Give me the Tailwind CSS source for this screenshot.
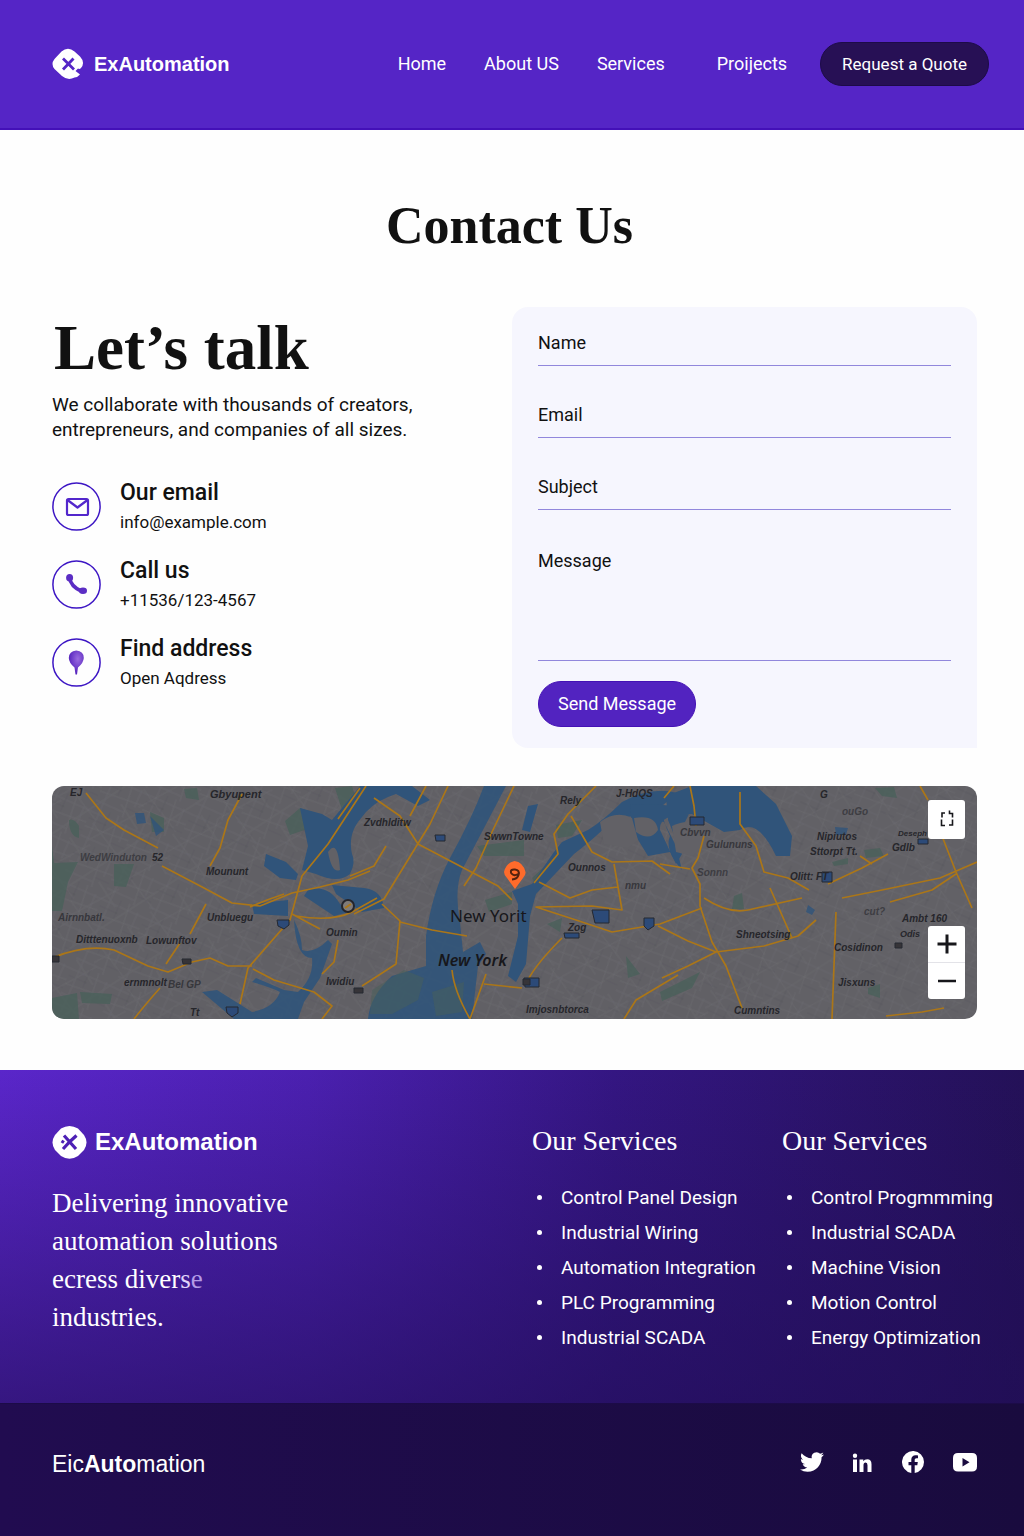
<!DOCTYPE html>
<html lang="en">
<head>
<meta charset="utf-8">
<meta name="viewport" content="width=device-width, initial-scale=1">
<title>ExAutomation – Contact Us</title>
<script src="https://cdn.jsdelivr.net/npm/@tailwindcss/browser@4"></script>
</head>
<body class="flex min-h-screen flex-col bg-[#fefefe] font-[Roboto,'Liberation_Sans',sans-serif] text-[#111]">

<header class="flex items-center justify-between border-b-2 border-[#4410b8] bg-[#5525c6] py-[42px] pr-[35px] pl-[52px] text-white">
  <a href="#" class="flex items-center gap-[10px] font-['Liberation_Sans',sans-serif] text-[20px] leading-6 font-bold">
    <svg class="size-8" viewBox="0 0 32 32" aria-hidden="true">
      <path fill="#fff" d="M9.500 3.500Q16-2 22.500 3.500L28 8.500Q33.500 14.500 29 20Q27.500 21.500 26 20.500L23.500 23L28 26.500Q26 29 22.500 29.500Q16 33 10 28L2.500 21Q-1.500 16 2.500 11Z"/>
      <path d="M11 10.500L22 21.500M21.500 10.500L11 21.500" stroke="#5525c6" stroke-width="2.800" fill="none"/>
    </svg>
    <span>ExAutomation</span>
  </a>
  <div class="flex items-center">
    <nav class="flex items-center gap-[38px] text-[18px] leading-6">
      <a href="#">Home</a>
      <a href="#">About US</a>
      <a href="#">Services</a>
      <a href="#" class="ml-[14px]">Proijects</a>
    </nav>
    <button type="button" class="ml-[33px] h-11 rounded-full border border-[#1d0b48] bg-[#271055] px-[21px] text-[17px] leading-6">Request a Quote</button>
  </div>
</header>

<main class="flex flex-col pr-[47px] pl-[52px]">
  <h1 class="mt-[68px] pr-[10px] text-center font-['Liberation_Serif',serif] text-[52px] leading-[56px] font-bold">Contact Us</h1>

  <div class="mt-[53px] grid grid-cols-[460fr_465fr]">
    <section>
      <h2 class="mt-[10px] pl-[2px] font-['Liberation_Serif',serif] text-[63px] leading-[62px] font-bold">Let’s talk</h2>
      <p class="mt-[13px] text-[19px] leading-[25px]">We collaborate with thousands of creators,<br>entrepreneurs, and companies of all sizes.</p>

      <ul class="mt-9 flex flex-col gap-5">
        <li class="flex items-start gap-[19px]">
          <svg class="mt-1 size-[49px] shrink-0" viewBox="0 0 49 49" fill="none" aria-hidden="true">
            <circle cx="24.500" cy="24.500" r="23.600" stroke="#3d16c4" stroke-width="1.500"/>
            <path d="M16.500 17H34.500Q36 17 36 18.500V31.500Q36 33 34.500 33H16.500Q15 33 15 31.500V18.500Q15 17 16.500 17ZM15.500 18L25.500 25.500L35.500 18" stroke="#5327cc" stroke-width="2.200" stroke-linejoin="round"/>
          </svg>
          <div>
            <h3 class="text-[23px] leading-[30px] font-medium">Our email</h3>
            <p class="text-[17px] leading-7">info@example.com</p>
          </div>
        </li>
        <li class="flex items-start gap-[19px]">
          <svg class="mt-1 size-[49px] shrink-0" viewBox="0 0 49 49" fill="none" aria-hidden="true">
            <circle cx="24.500" cy="24.500" r="23.600" stroke="#3d16c4" stroke-width="1.500"/>
            <path d="M17.500 17.500Q18.500 26.500 30 31.500" stroke="#5b2dc4" stroke-width="3.600" stroke-linecap="round"/>
            <ellipse cx="17.600" cy="17.800" rx="3.500" ry="3.800" fill="#5b2dc4"/>
            <ellipse cx="31" cy="30.800" rx="4" ry="3.200" fill="#5b2dc4"/>
          </svg>
          <div>
            <h3 class="text-[23px] leading-[30px] font-medium">Call us</h3>
            <p class="text-[17px] leading-7">+11536/123-4567</p>
          </div>
        </li>
        <li class="flex items-start gap-[19px]">
          <svg class="mt-1 size-[49px] shrink-0" viewBox="0 0 49 49" fill="none" aria-hidden="true">
            <defs><radialGradient id="pin" cx=".6" cy=".35" r=".6"><stop offset="0" stop-color="#9a6be0"/><stop offset="1" stop-color="#5624bd"/></radialGradient></defs>
            <circle cx="24.500" cy="24.500" r="23.600" stroke="#3d16c4" stroke-width="1.500"/>
            <path d="M24.300 12.500Q31.800 13 31.800 20Q31.500 25 26 29.500L25 36.500H23.500L22.500 29.500Q17 25 16.800 20Q17 13 24.300 12.500Z" fill="url(#pin)"/>
          </svg>
          <div>
            <h3 class="text-[23px] leading-[30px] font-medium">Find address</h3>
            <p class="text-[17px] leading-7">Open Aqdress</p>
          </div>
        </li>
      </ul>
    </section>

    <form class="flex flex-col rounded-2xl rounded-br-none bg-[#f6f6fe] px-[26px] pt-6 pb-[21px] text-[18px] leading-6">
      <div class="flex flex-col gap-[37px]">
        <div class="flex gap-3 border-b border-[#9187dc] pb-[10px]">
          <label for="name">Name</label>
          <input id="name" type="text" class="h-6 min-w-0 flex-1 bg-transparent outline-none">
        </div>
        <div class="flex gap-3 border-b border-[#9187dc] pb-[10px]">
          <label for="email">Email</label>
          <input id="email" type="email" class="h-6 min-w-0 flex-1 bg-transparent outline-none">
        </div>
        <div class="flex gap-3 border-b border-[#9187dc] pb-[10px]">
          <label for="subject">Subject</label>
          <input id="subject" type="text" class="h-6 min-w-0 flex-1 bg-transparent outline-none">
        </div>
        <div class="flex gap-3 border-b border-[#9187dc] pt-[2px] pb-2">
          <label for="message">Message</label>
          <textarea id="message" class="h-[103px] min-w-0 flex-1 resize-none bg-transparent outline-none"></textarea>
        </div>
      </div>
      <button type="submit" class="mt-5 h-[46px] self-start rounded-full border border-[#4411b5] bg-[#5223c0] px-[19px] text-white">Send Message</button>
    </form>
  </div>

  <section class="relative mt-[38px] h-[233px] overflow-hidden rounded-xl bg-[#626166]" aria-label="Map">
    <svg class="block size-full" viewBox="0 0 925 233" preserveAspectRatio="xMidYMid slice" fill="none">
      <defs>
        <pattern id="streets" width="46" height="38" patternUnits="userSpaceOnUse" patternTransform="rotate(24)">
          <path d="M0 7H46M0 23L46 19M8 0V38M27 0L31 38M0 33H30M38 5V24" stroke="#737378" stroke-width=".7" opacity=".4"/>
          <path d="M0 14H20M18 0V20M31 28H46" stroke="#4e4e53" stroke-width=".7" opacity=".4"/>
        </pattern>
        <pattern id="blocks" width="61" height="53" patternUnits="userSpaceOnUse" patternTransform="rotate(-33)">
          <path d="M0 12L61 17M0 40H61M14 0L18 53M48 0V30" stroke="#717176" stroke-width=".6" opacity=".4"/>
        </pattern>
      </defs>
      <rect width="925" height="233" fill="url(#streets)"/>
      <rect width="925" height="233" fill="url(#blocks)"/>

      <!-- parks -->
      <g fill="#48605a" opacity=".75">
        <path d="M2 77L26 76L16 96L10 125H0V60ZM62 78H82L74 101L62 100ZM17 34Q22 32 27 40L27 52Q17 50 17 34ZM132 3L145 2L147 14L134 12ZM0 212L25 207L27 233H0ZM28 206L60 208L58 218L30 217Z"/>
        <path d="M233 35L248 22L260 26L258 42L238 49ZM98 26L112 32V46H100ZM283 2L300 0L306 20L290 24Z"/>
        <path d="M425 60L472 54V70L432 70ZM433 114L460 106V118L437 126ZM504 39L530 34L520 50L506 52ZM574 170L588 188L576 192ZM480 92L508 66V76L484 100ZM495 138L510 132L508 146Z"/>
        <path d="M823 2L842 1L845 12L830 10ZM812 64L828 62L832 70L814 72ZM682 110L690 107L692 123L680 123ZM608 206L648 186L640 202L610 215ZM816 202L828 198L828 212L816 208ZM780 76L796 72V78L782 80Z"/>
      </g>
      <!-- rivers and bays -->
      <g fill="#30547a">
        <path d="M248 22L270 28L280 34L300 10L308 0H360L378 14L366 20L344 8Q325 14 314 26L306 36Q296 50 300 68Q304 76 298 88Q286 98 264 88L250 84L256 60Z"/>
        <path d="M214 68L234 76L246 88L244 94L228 92L212 80ZM200 118L236 114L236 130L202 128ZM256 104Q276 98 288 118L304 124L282 130L252 110ZM280 99L312 102Q330 104 332 122L310 126L284 108Z"/>
        <path d="M242 134Q250 150 250 164Q262 168 276 154L280 158L268 192L252 216L246 233H182L150 206L165 204L200 226Q222 222 228 206Q220 202 200 196L204 192L232 204L246 206Q262 192 260 172Q244 172 242 134Z" opacity=".9"/>
        <path d="M432 0H454Q430 46 410 84Q402 104 408 136L411 166L428 156L434 168L426 180L420 233H316Q318 210 340 190L374 180L374 150Q380 106 398 72Q420 32 432 0Z" opacity=".9"/>
        <path d="M476 20L486 18L478 46L470 44ZM460 105L480 98L502 66L510 56L536 44Q552 34 570 16Q600 0 625 7L610 20Q610 34 618 50Q612 64 630 84L624 60L612 36Q580 26 560 34Q548 48 522 68L484 108L478 130L474 178L464 196L456 190L466 150L466 118Z"/>
        <path d="M614 10L640 0H704L724 18L740 50L738 70L724 70Q706 32 688 44L672 46L640 28Q606 28 608 44L624 78L630 68L616 34ZM578 18Q612 18 640 22L618 66L596 70L580 44Z"/>
        <path d="M83 27L92 27L94 37L85 38ZM98 30L112 44L104 50ZM783 41L796 42L794 49H784ZM756 119L763 124L760 129L754 126Z" opacity=".8"/>
      </g>
      <g fill="#626166">
        <path d="M548 36Q564 24 580 32L586 54L576 62L552 58ZM582 32Q604 28 606 44Q598 56 584 46ZM276 66Q286 52 288 84Q280 88 276 66Z"/>
        <path d="M620 40Q650 26 654 60L640 70L624 66Z"/>
      </g>
      <path d="M320 204L352 184L372 192L366 214L340 228H318ZM380 206L412 196L410 226L384 230Z" fill="#48605a" opacity=".5"/>

      <!-- main roads -->
      <g stroke="#ab7618" stroke-width="1.700" stroke-linejoin="round">
        <path d="M34 7L54 32L72 44L106 62M110 80L152 102L180 117L208 120L240 107L268 101L296 94L318 85M190 8L176 34L168 62L158 80M314 0L276 58L250 90L238 134L196 182L188 218M308 2L286 33"/>
        <path d="M198 121Q214 114 232 108M240 128L268 143M244 130Q280 136 300 126L325 112M0 172Q34 158 62 164L96 180L116 186L140 176L158 172L176 180L200 180M128 157L114 178M154 118L138 148M108 202Q92 220 82 233M201 183L222 194L262 206L280 220L270 233M286 154L282 176L270 188"/>
        <path d="M322 12L348 30L366 58L446 100L460 114M374 0L358 30M396 0L378 38L332 113L302 128M330 118L348 135L344 178L310 200M348 136L380 144L415 150M334 60L322 80L298 90"/>
        <path d="M462 0L440 46L424 82L412 100M400 184Q402 205 418 233L434 188M432 198L470 202M482 97L506 68L502 48L516 28L544 0M519 30L540 66L560 76L600 75L618 88M562 78L570 124L540 120L484 121L524 134L560 146L608 138L650 122M487 96L518 112L540 104L566 101M510 152Q484 178 476 194M626 189L584 214L572 233M612 12L622 0"/>
        <path d="M638 0L642 20L644 40M652 50L646 72L640 82L648 98L648 120L660 156L674 180L690 222M688 6V38L704 60L712 86L736 92L757 104M638 83L608 78M606 140L636 155L664 166L712 160L746 150M610 192L636 180L666 165M652 112Q676 128 696 124L750 112M718 102L740 152M776 98L810 82L836 68M808 70L820 78M790 112L830 104L888 92L925 76M838 116L880 104L904 88M784 126L780 233M868 0L876 14M890 50L904 86L920 122M834 230L870 226L892 222M764 134L746 150"/>
      </g>

      <!-- route shields -->
      <g stroke="#252831" fill="#2c4a78">
        <path d="M225 134H237V139L232 143L226 140ZM174 221H186V227L180 231L175 227ZM383 49H393V55H384ZM540 124H557V137H543ZM512 147H527V152H513ZM592 132H602V140L596 144L592 140ZM472 192H487V201H473ZM638 31H652V39H638ZM866 53H876V58H866ZM770 86H780V96H770Z"/>
        <path fill="#363438" d="M0 170H7V176H0ZM130 173H139V178H131ZM843 157H850V162H843ZM302 202H311V207H302ZM471 193H478V199H471Z"/>
      </g>
      <circle cx="296" cy="120" r="6" stroke="#25252b" stroke-width="2" fill="#807b79"/>
      <path d="M293 122L299 118" stroke="#ab7618" stroke-width="2"/>

      <!-- district names -->
      <g font-family="'Liberation Sans', sans-serif" font-size="10" font-style="italic" font-weight="bold" fill="#26262b">
        <text x="18" y="10">EJ</text>
        <text x="158" y="12" font-size="11">Gbyupent</text>
        <text x="28" y="75" opacity=".6">WedWinduton</text>
        <text x="100" y="75">52</text>
        <text x="154" y="89">Moununt</text>
        <text x="6" y="135" opacity=".7">Airnnbatl.</text>
        <text x="155" y="135">Unbluegu</text>
        <text x="24" y="157">Ditttenuoxnb</text>
        <text x="94" y="158">Lowunftov</text>
        <text x="72" y="200">ernmnolt</text>
        <text x="116" y="202" opacity=".7">Bel GP</text>
        <text x="138" y="230">Tt</text>
        <text x="274" y="150">Oumin</text>
        <text x="274" y="199">Iwidiu</text>
        <text x="312" y="40">Zvdhlditw</text>
        <text x="432" y="54">SwwnTowne</text>
        <text x="508" y="18">Rely</text>
        <text x="516" y="85">Ounnos</text>
        <text x="573" y="103" opacity=".7">nmu</text>
        <text x="564" y="11">J-HdQS</text>
        <text x="516" y="145">Zog</text>
        <text x="474" y="227">Imjosnbtorca</text>
        <text x="768" y="12">G</text>
        <text x="628" y="50" opacity=".7">Cbvvn</text>
        <text x="654" y="62" opacity=".7">Gulununs</text>
        <text x="645" y="90" opacity=".6">Sonnn</text>
        <text x="765" y="54">Nipiutos</text>
        <text x="758" y="69">Sttorpt Tt.</text>
        <text x="738" y="94">OIitt: FT</text>
        <text x="846" y="50" font-size="8">Deseph</text>
        <text x="840" y="65">Gdlb</text>
        <text x="684" y="152">Shneotsing</text>
        <text x="782" y="165">Cosidinon</text>
        <text x="850" y="136">Ambt 160</text>
        <text x="848" y="151" font-size="9">Odis</text>
        <text x="786" y="200">Jisxuns</text>
        <text x="682" y="228">Cumntins</text>
        <text x="790" y="29" opacity=".6">ouGo</text>
        <text x="812" y="129" opacity=".6">cut?</text>
      </g>
      <g font-family="'Noto Sans', sans-serif" font-size="17" fill="#17171b">
        <text x="398" y="136">New Yorit</text>
        <text x="386" y="180" font-size="16" font-style="italic" font-weight="600">New York</text>
      </g>
      <path d="M462.500 75Q471 76 473.500 86Q474 89 471 92L463 103L455 92Q452 89 452 86Q454 77 462.500 75Z" fill="#ff6b2b"/>
      <path d="M459 87Q458 83 463 83.500Q468 84 466.500 89Q465.500 93 460 93.500M459 87Q462 91 466 88" stroke="#53220f" stroke-width="2"/>
    </svg>
    <button type="button" aria-label="Full screen" class="absolute top-[14px] right-3 grid h-[39px] w-[37px] place-items-center rounded-[3px] bg-white">
      <svg class="size-5" viewBox="0 0 20 20" fill="none" stroke="#17171b" stroke-width="1.600"><path d="M8 3H5V7.500M4.500 9.500V15.500H8M12.500 .5V3.500H15.500V7.500M15.500 9.500V15H12"/></svg>
    </button>
    <div class="absolute right-3 bottom-5 flex w-[37px] flex-col rounded-[3px] bg-white">
      <button type="button" aria-label="Zoom in" class="grid h-9 place-items-center">
        <svg class="size-5" viewBox="0 0 20 20" stroke="#17171b" stroke-width="3"><path d="M.5 10H19.500M10 .5V19.500"/></svg>
      </button>
      <button type="button" aria-label="Zoom out" class="grid h-[37px] place-items-center border-t border-[#e3e3e8]">
        <svg class="size-5" viewBox="0 0 20 20" stroke="#17171b" stroke-width="2.600"><path d="M1 10H19"/></svg>
      </button>
    </div>
  </section>
</main>

<footer class="mt-[51px] flex flex-1 flex-col text-white">
  <div class="grid grid-cols-[480fr_250fr_242fr] border-b border-[#1c0b48] bg-[linear-gradient(to_bottom,transparent,#200d55a0),linear-gradient(to_right,#5a26ca,#4b20b0_30%,#341682_60%,#241158)] pt-[54px] pb-12 pl-[52px]">
    <section>
      <a href="#" class="flex items-center gap-2 font-['Liberation_Sans',sans-serif] text-[24px] leading-9 font-bold">
        <svg class="size-[35px]" viewBox="0 0 35 35" aria-hidden="true">
          <path fill="#fff" d="M9 3.500Q17.500-1.500 26 3.500L32 10Q37 17.500 32 25L26 31Q17.500 36.500 9 31L3 25Q-2 17.500 3 10Z"/>
          <path d="M12 10.500L24 24M24.500 10.500L18 16.500L11 24M9.500 16L12 17.500" stroke="#4d20b5" stroke-width="3.200" fill="none"/>
        </svg>
        <span>ExAutomation</span>
      </a>
      <p class="mt-6 font-['Liberation_Serif',serif] text-[27px] leading-[38px]">Delivering innovative<br>automation solutions<br>ecress diver<span class="text-[#e0d4fa]">s</span><span class="text-[#b49be6]">e</span><br>industries.</p>
    </section>
    <section>
      <h2 class="font-['Liberation_Serif',serif] text-[28px] leading-[34px]">Our Services</h2>
      <ul class="mt-[22px] text-[19px] leading-[35px]">
        <li class="flex items-center gap-[19px] pl-[5px] before:size-[5px] before:rounded-full before:bg-white"><a href="#">Control Panel Design</a></li>
        <li class="flex items-center gap-[19px] pl-[5px] before:size-[5px] before:rounded-full before:bg-white"><a href="#">Industrial Wiring</a></li>
        <li class="flex items-center gap-[19px] pl-[5px] before:size-[5px] before:rounded-full before:bg-white"><a href="#">Automation Integration</a></li>
        <li class="flex items-center gap-[19px] pl-[5px] before:size-[5px] before:rounded-full before:bg-white"><a href="#">PLC Programming</a></li>
        <li class="flex items-center gap-[19px] pl-[5px] before:size-[5px] before:rounded-full before:bg-white"><a href="#">Industrial SCADA</a></li>
      </ul>
    </section>
    <section>
      <h2 class="font-['Liberation_Serif',serif] text-[28px] leading-[34px]">Our Services</h2>
      <ul class="mt-[22px] text-[19px] leading-[35px]">
        <li class="flex items-center gap-[19px] pl-[5px] before:size-[5px] before:rounded-full before:bg-white"><a href="#">Control Progmmming</a></li>
        <li class="flex items-center gap-[19px] pl-[5px] before:size-[5px] before:rounded-full before:bg-white"><a href="#">Industrial SCADA</a></li>
        <li class="flex items-center gap-[19px] pl-[5px] before:size-[5px] before:rounded-full before:bg-white"><a href="#">Machine Vision</a></li>
        <li class="flex items-center gap-[19px] pl-[5px] before:size-[5px] before:rounded-full before:bg-white"><a href="#">Motion Control</a></li>
        <li class="flex items-center gap-[19px] pl-[5px] before:size-[5px] before:rounded-full before:bg-white"><a href="#">Energy Optimization</a></li>
      </ul>
    </section>
  </div>

  <div class="flex flex-1 items-start justify-between bg-linear-to-r from-[#210c50] to-[#190b3e] pt-[44px] pr-[47px] pb-[56px] pl-[52px]">
    <p class="font-['Liberation_Sans',sans-serif] text-[23px] leading-8">Eic<b>Auto</b>mation</p>
    <div class="flex items-center gap-[27px] pt-[2px]">
      <a href="#" aria-label="Twitter"><svg class="size-6" viewBox="0 0 24 24" fill="#fff"><path d="M23.950 4.570a10 10 0 0 1-2.820.770 4.960 4.960 0 0 0 2.160-2.720c-.950.550-2 .950-3.130 1.180a4.920 4.920 0 0 0-8.380 4.480C7.690 8.090 4.070 6.130 1.640 3.160a4.820 4.820 0 0 0-.670 2.480c0 1.700.870 3.210 2.190 4.100a4.900 4.900 0 0 1-2.230-.620v.060a4.920 4.920 0 0 0 3.950 4.830 5 5 0 0 1-2.210.080 4.940 4.940 0 0 0 4.600 3.420A9.870 9.870 0 0 1 0 19.540a14 14 0 0 0 7.560 2.210c9.050 0 14-7.500 14-13.980 0-.210 0-.420-.020-.630a9.940 9.940 0 0 0 2.410-2.570Z"/></svg></a>
      <a href="#" aria-label="LinkedIn"><svg class="size-6" viewBox="0 0 24 24" fill="#fff"><path d="M2 9.500H6V22H2ZM4 3.500A2.200 2.200 0 1 1 4 7.900A2.200 2.200 0 0 1 4 3.500ZM8.500 9.500H12.300V11.200Q13.500 9.200 16.200 9.200Q20.500 9.200 20.500 14.300V22H16.500V15.200Q16.500 12.500 14.600 12.500Q12.500 12.500 12.500 15.200V22H8.500Z"/></svg></a>
      <a href="#" aria-label="Facebook"><svg class="size-6" viewBox="0 0 24 24" fill="#fff"><path d="M22 12A11 11 0 1 0 9.300 22.900V15.200H6.500V12H9.300V9.600C9.300 6.800 11 5.200 13.500 5.200C14.700 5.200 16 5.400 16 5.400V8.200H14.600C13.200 8.200 12.700 9 12.700 9.900V12H15.800L15.300 15.200H12.700V22.900A11 11 0 0 0 22 12Z"/></svg></a>
      <a href="#" aria-label="YouTube"><svg class="size-6" viewBox="0 0 24 24" fill="#fff"><path fill-rule="evenodd" d="M5 3H19Q24 3 24 8V16.500Q24 21.500 19 21.500H5Q0 21.500 0 16.500V8Q0 3 5 3ZM9.500 8V16.500L16.500 12.200Z"/></svg></a>
    </div>
  </div>
</footer>
</body>
</html>
